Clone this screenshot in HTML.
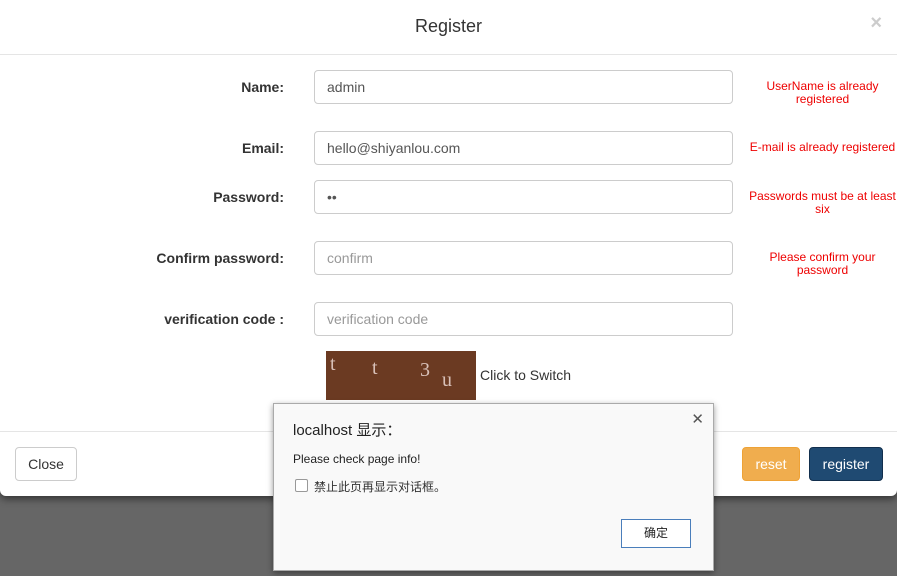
<!DOCTYPE html>
<html><head><meta charset="utf-8"><style>
*{box-sizing:border-box}
body{margin:0;width:897px;height:576px;overflow:hidden;background:#666;font-family:"Liberation Sans","Noto Sans CJK SC",sans-serif;position:relative}
.modal{position:absolute;left:0;top:0;width:897px;height:496px;background:#fff;border-radius:0 0 6px 6px;box-shadow:0 3px 8px rgba(0,0,0,.5)}
.hdr{height:55px;border-bottom:1px solid #e5e5e5;text-align:center;font-size:18px;color:#333;line-height:52px}
.x{position:absolute;right:15px;top:12px;font-size:20px;color:#ccc;font-weight:bold}
.lbl{position:absolute;right:613px;font-size:14px;font-weight:bold;color:#333}
.inp{position:absolute;left:314px;width:419px;height:34px;border:1px solid #ccc;border-radius:4px;font-size:14px;color:#555;padding:0 12px;line-height:32px}
.ph{color:#999}
.err{position:absolute;left:745px;width:155px;text-align:center;color:#e00;font-size:12px;line-height:13px}
.ftr{position:absolute;left:0;top:431px;width:897px;border-top:1px solid #e5e5e5}
.btn{position:absolute;top:447px;height:34px;border-radius:4px;font-size:14px;line-height:32px;text-align:center}
.alert{position:absolute;left:273px;top:403px;width:441px;height:168px;background:#f9f9f9;border:1px solid #aaa;box-shadow:0 2px 6px rgba(0,0,0,.4)}
</style></head><body>
<div class="modal">
<div class="hdr">Register</div><div class="x">×</div>
<div class="lbl" style="top:79px">Name:</div>
<div class="inp" style="top:70px">admin</div>
<div class="err" style="top:80px">UserName is already registered</div>
<div class="lbl" style="top:140px">Email:</div>
<div class="inp" style="top:131px">hello@shiyanlou.com</div>
<div class="err" style="top:141px">E-mail is already registered</div>
<div class="lbl" style="top:189px">Password:</div>
<div class="inp" style="top:180px">••</div>
<div class="err" style="top:190px">Passwords must be at least six</div>
<div class="lbl" style="top:250px">Confirm password:</div>
<div class="inp ph" style="top:241px">confirm</div>
<div class="err" style="top:251px">Please confirm your password</div>
<div class="lbl" style="top:311px">verification code :</div>
<div class="inp ph" style="top:302px">verification code</div>
<div style="position:absolute;left:326px;top:351px;width:150px;height:49px;background:#6b3a22;color:#d8c0b8;font-size:20px;font-family:'Liberation Serif',serif"><span style="position:absolute;left:4px;top:2px">t</span><span style="position:absolute;left:46px;top:6px">t</span><span style="position:absolute;left:94px;top:8px">3</span><span style="position:absolute;left:116px;top:18px">u</span></div>
<div style="position:absolute;left:480px;top:367px;font-size:14px;color:#333">Click to Switch</div>
<div class="ftr"></div>
<div class="btn" style="left:15px;width:62px;border:1px solid #ccc;color:#333">Close</div>
<div class="btn" style="left:742px;width:58px;background:#f0ad4e;border:1px solid #eea236;color:#fff">reset</div>
<div class="btn" style="left:809px;width:74px;background:#1f4a72;border:1px solid #122f4d;color:#fff">register</div>
</div>
<div class="alert">
<div style="position:absolute;right:9px;top:6px;font-size:15px;color:#555">✕</div>
<div style="position:absolute;left:19px;top:15px;font-size:15px;color:#222">localhost 显示：</div>
<div style="position:absolute;left:19px;top:48px;font-size:12px;color:#222">Please check page info!</div>
<div style="position:absolute;left:21px;top:75px;width:13px;height:13px;border:1px solid #999;border-radius:2px;background:#fff"></div>
<div style="position:absolute;left:40px;top:74px;font-size:12px;color:#333">禁止此页再显示对话框。</div>
<div style="position:absolute;left:347px;top:115px;width:70px;height:29px;border:1px solid #4a7ebb;background:#fff;font-size:12px;text-align:center;line-height:27px;color:#222">确定</div>
</div>
</body></html>
